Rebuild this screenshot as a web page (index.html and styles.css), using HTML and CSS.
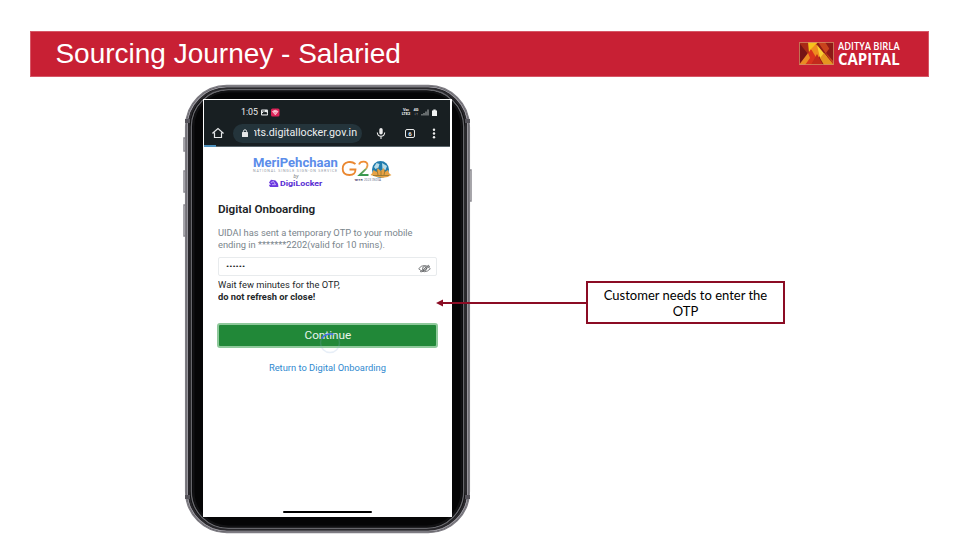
FILE: index.html
```html
<!DOCTYPE html>
<html lang="en">
<head>
<meta charset="utf-8">
<title>Sourcing Journey - Salaried</title>
<link rel="stylesheet" href="styles.css">
</head>
<body>
<header class="banner">
  <h1>Sourcing Journey - Salaried</h1>
  <div class="brand">
    <svg class="brand-mark" width="35" height="23" viewBox="0 0 35 23">
      <rect width="35" height="23" fill="#8f1b17"/>
      <path d="M0 0L9 0L17 15L11 23H0L8 12z" fill="#a92a16"/>
      <path d="M9 0H19L10 11z" fill="#f6c21c"/>
      <path d="M19 0H26L35 14V23L27 12z" fill="#c9431d"/>
      <path d="M1 23L12 7L18 15L12 23z" fill="#d9331d"/>
      <path d="M12 7L17 2L24 11L18 17z" fill="#ef8c1f"/>
      <path d="M18 3L28 15L21 16z" fill="#f9cf32"/>
      <path d="M12 23L18 12L24 23z" fill="#c32a1c"/>
      <path d="M25 11L35 23H25L21 16z" fill="#e5951f"/>
      <path d="M0 1L9 12L0 22z" fill="#741415"/>
      <path d="M0 23L9 11L11 16L6 23z" fill="#e98b23"/>
      <path d="M35 0L27 11L35 20z" fill="#8b1917"/>
      <rect x=".5" y=".5" width="34" height="22" fill="none" stroke="#d58a63" stroke-opacity=".8"/>
    </svg>
    <div class="brand-name"><span class="brand-top">ADITYA BIRLA</span><span class="brand-bottom">CAPITAL</span></div>
  </div>
</header>
<main class="stage">
  <section class="phone">
    <svg class="frame" width="289" height="450" viewBox="183 84 289 450" fill="none">
      <path d="M185 138h-1v13h1M185 171h-1v21h1M185 205h-1v31h1M470 170h1v31h-1" stroke="#8b8990" stroke-width="1.500"/>
      <rect x="185.700" y="85.500" width="283.600" height="447" rx="41" fill="#050506" stroke="#7e7c83" stroke-width="1.500"/>
      <rect x="187.200" y="87" width="280.600" height="444" rx="39.500" stroke="#97959c" stroke-width="1.600"/>
      <rect x="189" y="88.500" width="277" height="441" rx="38" stroke="#29282c" stroke-width="2"/>
      <rect x="191.300" y="89.800" width="272.400" height="438.500" rx="37" stroke="#66666b" stroke-width="1.400"/>
      <rect x="193.500" y="91.500" width="268" height="435" rx="35" stroke="#111113" stroke-width="2"/>
      <path d="M185 121h5M465 121h5M185 497h5M465 497h5" stroke="#55535a" stroke-width="4"/>
    </svg>
    <div class="screen">
      <div class="chrome">
        <div class="status">
          <span class="time">1:05</span>
          <svg width="20" height="9" viewBox="0 0 20 9">
            <rect x="1" y="1.500" width="7" height="6" rx="1" fill="#e9eced"/><path d="M2 6l2-2 1 1 1-1 1 2zM2 3h3" fill="#171d20" stroke="#171d20" stroke-width=".8"/>
            <rect x="11" y=".5" width="8.500" height="8" rx="1.500" fill="#dc2358"/><path d="M12.500 3.500q2.700-2.500 5.500 0l-2.700 3.300zM14 3.500h2.500" fill="#f391ac" stroke="#ffe0e8" stroke-width=".7"/>
          </svg>
          <span class="volte"><b>Voı</b><b>LTE2</b></span>
          <span class="four"><b>4G</b><b>↓↑</b></span>
          <svg class="bars" width="19" height="9" viewBox="0 0 19 9"><path d="M1 7.500V6M3 7.500V5M5 7.500V3.500M7 7.500V1.500" stroke="#a9adae" stroke-width="1.100"/><path d="M11 2.500h1.300v-1h2.400v1H16v5.500h-5z" fill="#f1f3f3"/></svg>
        </div>
        <div class="toolbar">
          <svg class="home" width="12" height="12" viewBox="0 0 12 12"><path d="M.8 6L6 1.500 11.200 6H9.500v4.500h-7V6z" fill="none" stroke="#e6e8e9" stroke-width="1.200"/></svg>
          <div class="address">
            <svg width="8" height="9" viewBox="0 0 8 9"><rect x="1" y="3" width="6" height="5" rx=".6" fill="#e5e7e8"/><path d="M2.400 3.500V2.300q0-1.500 1.600-1.500t1.600 1.500v1.200" fill="none" stroke="#e5e7e8"/></svg>
            <span class="url"><span>nts.digitallocker.gov.in</span></span>
          </div>
          <svg class="mic" width="10" height="13" viewBox="0 0 10 13"><rect x="3.300" y="1" width="3.400" height="6.500" rx="1.700" fill="#eee"/><path d="M1.300 5.500q.3 3.700 3.700 3.700t3.700-3.700M5 9.500V12" fill="none" stroke="#eee" stroke-width="1.100"/></svg>
          <span class="tabs">6</span>
          <svg class="dots" width="4" height="11" viewBox="0 0 4 11" fill="#eee"><circle cx="2" cy="1.700" r="1.200"/><circle cx="2" cy="5.500" r="1.200"/><circle cx="2" cy="9.300" r="1.200"/></svg>
        </div>
      </div>
      <div class="logos">
        <div class="meri">
          <span class="meri-name">MeriPehchaan</span>
          <span class="meri-sub">NATIONAL SINGLE SIGN-ON SERVICE</span>
          <span class="by">by</span>
          <div class="digi">
            <svg width="11" height="9" viewBox="0 0 11 9"><path d="M1 3.500L3 .8l3 .4q2.300-.3 2.700 1.800 1.800 1 1.600 5H2L.8 5.800h2z" fill="#6b38df"/><path d="M2.800 3.500l2.700-1 2 3.200H4" fill="none" stroke="#d9c9ff" stroke-width=".8"/></svg>
            <span>DigiLocker</span>
          </div>
        </div>
        <svg class="g20" width="52" height="25" viewBox="341 159 52 25">
          <defs><linearGradient id="g" x1="0" y1="0" x2="0" y2="1"><stop offset="0" stop-color="#ee8b32"/><stop offset=".5" stop-color="#e6a455"/><stop offset=".55" stop-color="#78aa62"/><stop offset="1" stop-color="#37984f"/></linearGradient></defs>
          <path d="M355.500 164Q352 161.300 348 162.200Q342.700 163.500 342.700 168.700Q342.700 175 349.500 175Q355.500 175 355.500 169.500H349.500" fill="none" stroke="#ea8730" stroke-width="1.800"/>
          <path d="M359 164.500q1-2.800 4.500-2.800 4 0 4 3.600 0 2.700-3.700 5.700L359.500 175h9" fill="none" stroke="url(#g)" stroke-width="1.800"/>
          <circle cx="380.500" cy="169.500" r="8.500" fill="#217cad"/>
          <path d="M374 167l2.500-4 3 1-1 3.500-3 1.500zM382 163l5 3-1.500 4-3-1z" fill="#b8dce7"/>
          <path d="M370.500 175q2-1 3-5l3.200 2 1-4 3 3 3-3 1.200 4 3-2q.8 4 3.600 5-5 3.500-11 2.500t-10-2.500z" fill="#e8a244"/>
          <path d="M373 175.500h16M377 170l1 5M381 171v5M385 170l-1 5" stroke="#8d7430" stroke-width=".8"/>
          <text x="354.500" y="181" font-size="3.300" font-weight="bold" fill="#49476b" textLength="8">भारत</text>
          <text x="364" y="181" font-size="3" fill="#66708c" textLength="17">2023 INDIA</text>
        </svg>
      </div>
      <h2><span>Digital Onboarding</span></h2>
      <p class="sent"><span>UIDAI has sent a temporary OTP to your mobile</span><span>ending in *******2202(valid for 10 mins).</span></p>
      <div class="otp"><span>••••••</span>
        <svg width="13" height="9" viewBox="0 0 13 9" fill="none" stroke="#55585a" stroke-width=".8"><path d="M.7 4.700Q3 1.500 6.500 1.500t5.800 3.200Q9.800 7.700 6.500 7.700T.7 4.700z"/><circle cx="6.500" cy="4.600" r="2"/><path d="M2 8L11 1M3.500 8L12 2"/></svg>
      </div>
      <p class="wait"><span>Wait few minutes for the OTP,</span><b>do not refresh or close!</b></p>
      <div class="continue"><span>Continue</span>
        <svg class="spinner" width="22" height="22" viewBox="0 0 22 22" fill="none"><circle cx="11" cy="11" r="9.500" stroke="#86a9d5" stroke-opacity=".2" stroke-width="1.500"/><path d="M2.500 6.500Q7 .8 14.500 2.300" stroke="#456be4" stroke-width="1.600"/></svg>
      </div>
      <div class="return"><span>Return to Digital Onboarding</span></div>
      <div class="homebar"></div>
    </div>
  </section>
  <aside class="callout">Customer needs to enter the<br>OTP
    <svg class="arrow" width="152" height="10" viewBox="0 0 152 10"><path d="M6 5H151" stroke="#8b0c24" stroke-width="2"/><path d="M0 5L7 1.500V8.500z" fill="#8b0c24"/></svg>
  </aside>
</main>
</body>
</html>
```
FILE: styles.css
```css
* { box-sizing: border-box; }
body { margin: 0; width: 960px; height: 540px; overflow: hidden; background: #fff; font-family: Roboto, sans-serif; }
h1, h2, p { margin: 0; }
.banner { margin: 31px 31px 0 30px; height: 46px; background: #c82034; border: 1px solid #d65766; display: flex; justify-content: space-between; color: #fff; }
h1 { font: 400 28px/43px "Liberation Sans", Arial, sans-serif; margin-left: 24.400px; }
.brand { display: flex; padding: 10px 29px 0 0; gap: 4px; }
.brand-mark { flex: none; }
.brand-name { width: 61.500px; display: flex; flex-direction: column; font-family: "Open Sans", sans-serif; white-space: nowrap; }
.brand-top { font-size: 11px; font-weight: 600; line-height: 11px; width: max-content; margin-top: -2px; transform: scaleX(.85); transform-origin: left; }
.brand-bottom { font-size: 15.500px; font-weight: 700; line-height: 14px; width: max-content; margin-top: 1px; transform: scaleX(.965); transform-origin: left; }
.stage { display: flex; margin-left: 185px; padding-top: 8px; align-items: flex-start; }
.phone { position: relative; width: 285px; height: 448px; flex: none; padding: 14px 0 0 18px; }
.frame { position: absolute; left: -2px; top: -1px; }
.screen { position: relative; width: 249px; height: 418px; background: #fff; padding: 1px 2px 0 1px; display: flex; flex-direction: column; }
.chrome { height: 46.500px; background: #181f22; border-bottom: 1.500px solid #59646a; color: #eceeef; position: relative; flex: none; }
.chrome::after { content: ""; position: absolute; left: 0; bottom: -1.500px; width: 12px; height: 2px; background: #4e91bd; }
.status { display: flex; align-items: center; height: 24px; margin-left: 37px; }
.time { font-size: 9px; transform: scaleX(.98); transform-origin: left; width: 18px; }
.status > svg:first-of-type { margin-left: 1px; }
.volte, .four { display: flex; flex-direction: column; font-size: 4px; line-height: 4px; font-weight: 500; align-items: center; }
.volte { margin-left: 121px; width: 10px; }
.four { width: 8px; margin-left: 1px; }
.bars { margin-left: 1px; }
.toolbar { display: flex; align-items: center; height: 18px; }
.home { margin-left: 8px; }
.address { display: flex; align-items: center; background: #24343b; height: 19px; width: 129px; border-radius: 10px; margin-left: 9px; padding-left: 8px; }
.url { margin-left: 5px; width: 106px; overflow: hidden; font-size: 10.500px; line-height: 14px; white-space: nowrap; }
.url span { display: inline-block; margin-left: -3px; transform: scaleX(1.02); transform-origin: left; }
.mic { margin-left: 14px; }
.tabs { margin-left: 19px; width: 10px; height: 9px; border: 1.200px solid #e8eaea; border-radius: 2px; font-size: 6px; line-height: 7px; text-align: center; font-weight: 700; }
.dots { margin-left: 17px; }
.logos { display: flex; height: 56px; flex: none; }
.meri { margin-left: 49px; width: 86px; display: flex; flex-direction: column; white-space: nowrap; }
.meri-name { color: #5b8dea; font-weight: 700; font-size: 12.500px; line-height: 14px; margin-top: 9px; width: max-content; transform: scaleX(1.045); transform-origin: left; }
.meri-sub { font-size: 3.600px; line-height: 4px; letter-spacing: .8px; color: #9299a5; margin-top: -1px; }
.by { font-size: 5px; line-height: 6px; color: #777; text-align: center; font-style: italic; }
.digi { display: flex; margin-left: 15px; gap: 1px; color: #572bd3; font-weight: 700; font-size: 8px; line-height: 9px; }
.digi span { transform: scaleX(1.1); transform-origin: left; }
.g20 { margin: 12px 0 0 2px; font-family: "Noto Sans", sans-serif; }
h2 { height: 24px; flex: none; margin-left: 14px; font-size: 10.500px; font-weight: 600; color: #202326; line-height: 14px; }
h2 span { display: block; width: max-content; transform: scaleX(1.11); transform-origin: left; }
.sent { margin-left: 14px; height: 30px; flex: none; color: #7a858c; font-size: 9px; line-height: 12px; }
.sent span, .wait span, .wait b { display: block; width: max-content; white-space: nowrap; transform: scaleX(1.037); transform-origin: left; }
.otp { margin-left: 14px; width: 219px; height: 19px; flex: none; border: 1px solid #e8ebed; border-radius: 2px; display: flex; justify-content: space-between; align-items: center; padding: 0 5px 0 7px; font-size: 7px; color: #222; }
.otp span { transform: scaleX(1.35); transform-origin: left; margin-top: 1px; }
.otp svg { margin-top: 4px; }
.wait { margin-left: 14px; height: 47px; flex: none; font-size: 9px; line-height: 12px; color: #24282a; padding-top: 3px; }
.continue { margin-left: 13px; width: 221px; height: 25px; flex: none; background: #218838; border: 2px solid #8fc99b; border-radius: 3px; color: #e8f4ea; text-align: center; line-height: 21px; font-size: 10.500px; position: relative; }
.continue > span { display: inline-block; transform: scaleX(1.12); }
.spinner { position: absolute; left: 100px; top: 7px; }
.return { text-align: center; color: #3089cf; font-size: 9px; line-height: 12px; margin-top: 14px; }
.return span { display: inline-block; transform: scaleX(1.037); }
.homebar { width: 89px; height: 2.500px; border-radius: 2px; background: #000; margin: auto 0 4px 79px; }
.callout { position: relative; margin: 196px 0 0 116px; width: 199px; height: 43px; border: 2px solid #8b0c24; text-align: center; font: 13px/16px Lato, sans-serif; color: #000; padding-top: 4px; }
.arrow { position: absolute; left: -152px; top: 15px; }
```
